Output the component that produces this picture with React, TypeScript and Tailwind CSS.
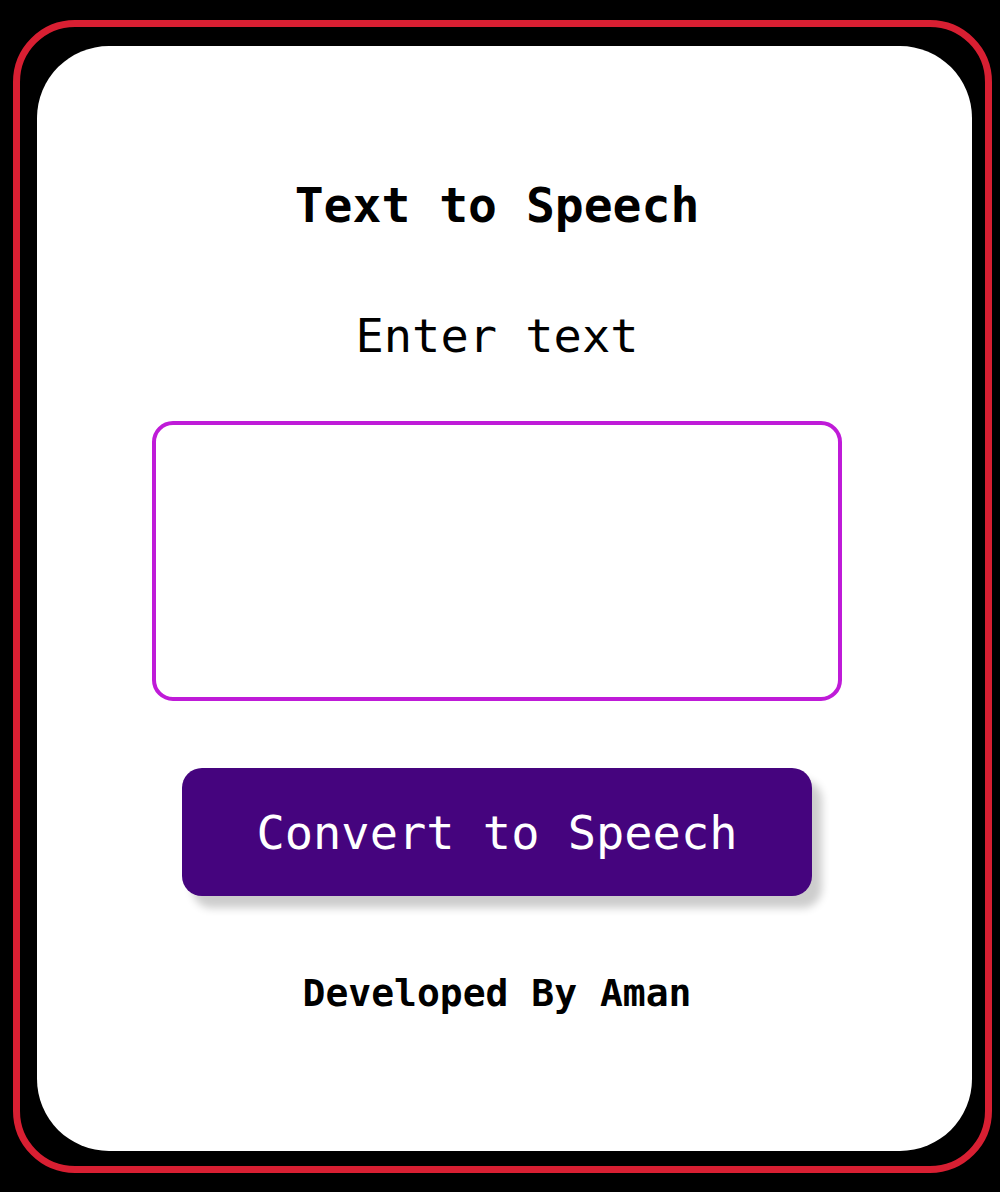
import React from "react";

export default function App() {
  const mono = { fontFamily: '"DejaVu Sans Mono", "Liberation Mono", monospace' };
  return (
    <div className="w-[1000px] h-[1192px] bg-black pl-[13px] pt-[20px] pr-[8px] pb-[19px]" style={mono}>
      <div className="h-full w-full border-[7px] border-[#d81f32] rounded-[62px] pl-[17px] pt-[19px] pr-[13px] pb-[15px]">
        <div className="h-full w-full bg-white rounded-[72px] flex flex-col items-center pr-[15px] pt-[135px]">
          <h1 className="text-[48px] leading-none font-bold text-black">Text to Speech</h1>
          <p className="mt-[83px] text-[47px] leading-none text-black">Enter text</p>
          <textarea className="mt-[62px] w-[690px] h-[280px] border-[4px] border-[#bf1bd8] rounded-[21px] bg-white resize-none outline-none p-3 text-[24px]" />
          <button className="mt-[67px] w-[630px] h-[128px] rounded-[20px] bg-[#45047e] text-white text-[47px] leading-none shadow-[10px_12px_8px_rgba(0,0,0,0.2)]">
            Convert to Speech
          </button>
          <p className="mt-[78px] text-[38px] leading-none font-bold text-black">Developed By Aman</p>
        </div>
      </div>
    </div>
  );
}
